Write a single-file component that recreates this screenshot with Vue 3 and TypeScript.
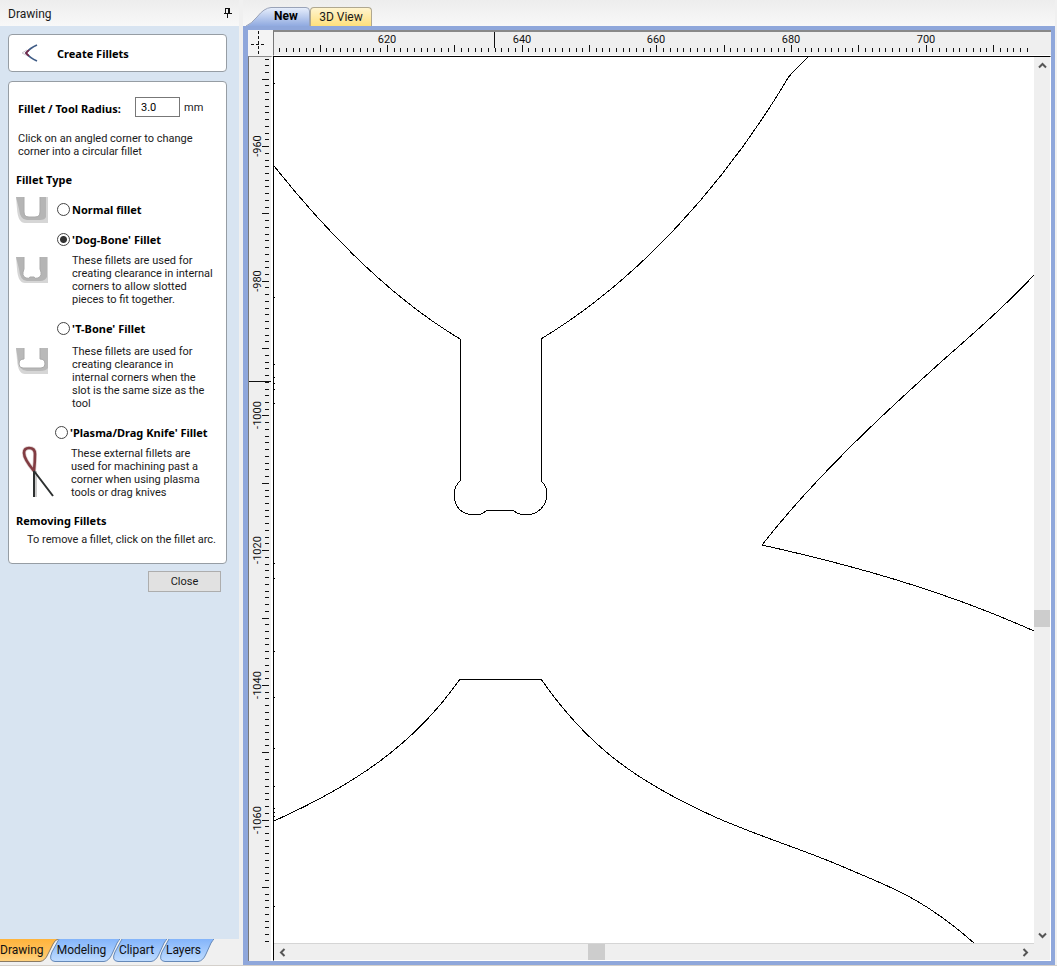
<script setup lang="ts">
import { ref } from 'vue'

interface Tick { pos: number; major: boolean; label: string }

const UNIT = 6.735

function buildTicks(first: number, count: number, start: number, step: number): Tick[] {
  const ticks: Tick[] = []
  for (let i = 0; i < count; i++) {
    const value = start + i * step
    ticks.push({
      pos: Math.floor(first + i * UNIT),
      major: value % 10 === 0,
      label: value % 20 === 0 ? String(value) : '',
    })
  }
  return ticks
}

const hTicks = buildTicks(5.7, 112, 604, 1)
const vTicks = buildTicks(2, 132, -947, -1)

const radius = ref('3.0')
const fillet = ref('dogbone')
const marks = [26, 240, 307, 320, 326, 332, 346, 506, 521, 594, 640, 691, 729, 751, 755, 759, 849]

const sideTabs = [
  { name: 'Modeling', width: 70 },
  { name: 'Clipart', width: 54 },
  { name: 'Layers', width: 54 },
]

function tabShape(w: number): string {
  return `M9 0 L2 13 Q-2 22 5 22.5 H${w - 16} Q${w - 11} 22 ${w - 8} 15 L${w - 3} 4 Q${w - 1} 1 ${w} 0`
}
</script>

<template>
  <div class="app">
    <aside class="side">
      <header class="side-head">
        <span>Drawing</span>
        <button class="pin" aria-label="Pin panel">
          <svg width="9" height="11" viewBox="0 0 9 11"><path d="M2.5 6V1.5H6V6M6.5 1V6M5.5 1V6M0.5 6.5H8.5M4.5 7V11" /></svg>
        </button>
      </header>

      <div class="side-body">
        <section class="card title-card">
          <button class="back" aria-label="Back">
            <svg width="18" height="20" viewBox="0 0 18 20">
              <path d="M1 10L6 7M1 10L7 13" stroke="#c9c4cc" stroke-width="1" />
              <path d="M16 2Q9 5 5 10Q9 15 16 18" stroke="#3f5c86" stroke-width="1.8" />
              <path d="M8 7L5 10L8 13" stroke="#7a2547" stroke-width="1.6" />
            </svg>
          </button>
          <h1>Create Fillets</h1>
        </section>

        <section class="card form-card">
          <div class="radius">
            <label for="radius">Fillet / Tool Radius:</label>
            <input id="radius" v-model="radius" type="text" />
            <span>mm</span>
          </div>
          <p class="hint">Click on an angled corner to change<br />corner into a circular fillet</p>
          <h2 class="type-title">Fillet Type</h2>

          <div class="option normal">
            <svg class="icon" width="32" height="27" viewBox="0 0 32 27">
              <path d="M0 0H8V15Q8 20 13 20H19Q24 20 24 15V0H32V26H9Q2 26 1 12Z" fill="#d6d6d6" />
              <path d="M0 0H8V15Q8 20 13 20H19Q24 20 24 15V0H30V20Q29 23 24 23H11Q4 23 3 12Z" fill="#b5b5b5" />
              <path d="M8 0V15Q8 20 13 20H19Q24 20 24 15V0" fill="none" stroke="#aaa" />
            </svg>
            <label class="choice"><input v-model="fillet" type="radio" name="fillet" value="normal" />Normal fillet</label>
          </div>

          <div class="option dogbone">
            <svg class="icon" width="32" height="27" viewBox="0 0 32 27">
              <path d="M0 0H8V12Q5 19 10 21Q14 22 14 20H18Q19 22 22 21Q27 19 24 12V0H32V26H9Q2 26 1 12Z" fill="#d6d6d6" />
              <path d="M0 0H8V12Q5 19 10 21Q14 22 14 20H18Q19 22 22 21Q27 19 24 12V0H31V20Q29 24 24 24H11Q4 24 3 12Z" fill="#b5b5b5" />
              <path d="M8 0V12Q5 19 10 21Q13 22 14 20H18Q19 22 22 21Q27 19 24 12V0" fill="none" stroke="#aaa" />
            </svg>
            <div>
              <label class="choice"><input v-model="fillet" type="radio" name="fillet" value="dogbone" />'Dog-Bone' Fillet</label>
              <p class="desc">These fillets are used for<br />creating clearance in internal<br />corners to allow slotted<br />pieces to fit together.</p>
            </div>
          </div>

          <div class="option tbone">
            <svg class="icon" width="32" height="27" viewBox="0 0 32 27">
              <path d="M0 0H8V11Q3 11 3 16Q3 20 7 20H25Q29 20 29 16Q29 11 24 11V0H32V26H9Q2 26 1 12Z" fill="#d6d6d6" />
              <path d="M0 0H8V11Q3 11 3 16Q3 20 7 20H25Q29 20 29 16Q29 11 24 11V0H32V20Q30 23 24 23H11Q3 23 2 12Z" fill="#b9b9b9" />
              <path d="M8 0V11Q3 11 3 16Q3 20 7 20H25Q29 20 29 16Q29 11 24 11V0" fill="none" stroke="#aaa" />
            </svg>
            <div>
              <label class="choice"><input v-model="fillet" type="radio" name="fillet" value="tbone" />'T-Bone' Fillet</label>
              <p class="desc">These fillets are used for<br />creating clearance in<br />internal corners when the<br />slot is the same size as the<br />tool</p>
            </div>
          </div>

          <div class="option plasma">
            <svg class="icon" width="40" height="54" viewBox="0 0 40 54">
              <path d="M18 26Q8 14 8 8Q8 3 13 3Q19 3 19 9Q19 17 18 26" fill="none" stroke="#b99" stroke-width="4" opacity=".5" />
              <path d="M18 26Q8 14 8 8Q8 3 13 3Q19 3 19 9Q19 17 18 26" fill="none" stroke="#813c42" stroke-width="2.6" />
              <path d="M19 26V52" stroke="#aaa" stroke-width="4" opacity=".6" />
              <path d="M18 26V52M18 26L37 51" stroke="#2d3030" stroke-width="2" />
            </svg>
            <div>
              <label class="choice"><input v-model="fillet" type="radio" name="fillet" value="plasma" />'Plasma/Drag Knife' Fillet</label>
              <p class="desc">These external fillets are<br />used for machining past a<br />corner when using plasma<br />tools or drag knives</p>
            </div>
          </div>

          <h2 class="remove-title">Removing Fillets</h2>
          <p class="remove">To remove a fillet, click on the fillet arc.</p>
        </section>
        <button class="close">Close</button>
      </div>

      <nav class="side-tabs">
        <button class="side-tab active">
          <svg width="58" height="24" viewBox="0 0 58 24">
            <defs>
              <linearGradient id="orange" x1="0" y1="0" x2="0" y2="1"><stop offset="0" stop-color="#ffb43c" /><stop offset=".5" stop-color="#ffbf58" /><stop offset="1" stop-color="#ffd27f" /></linearGradient>
              <linearGradient id="blue" x1="0" y1="0" x2="0" y2="1"><stop offset="0" stop-color="#83b4fa" /><stop offset="1" stop-color="#bfdcff" /></linearGradient>
            </defs>
            <path d="M0 0H58Q55 1 53 5L48 15Q45 22 40 22.500H0Z" fill="url(#orange)" />
            <path d="M58 0Q55 1 53 5L48 15Q45 22 40 22.500H0" fill="none" stroke="#8a7a62" />
          </svg>
          <span>Drawing</span>
        </button>
        <button v-for="tab in sideTabs" :key="tab.name" class="side-tab" :style="{ width: tab.width + 'px' }">
          <svg :width="tab.width" height="24">
            <path :d="tabShape(tab.width)" fill="url(#blue)" stroke="#6689b8" />
          </svg>
          <span>{{ tab.name }}</span>
        </button>
      </nav>
    </aside>

    <main class="work">
      <nav class="doc-tabs">
        <button class="doc-tab current">
          <svg width="67" height="19" viewBox="0 0 67 19">
            <defs><linearGradient id="newtab" x1="0" y1="0" x2="0" y2="1"><stop offset="0" stop-color="#e8effc" /><stop offset="1" stop-color="#90aae0" /></linearGradient></defs>
            <path d="M3 19Q8 17 14 10Q21 1 28 .5H63Q66.500 .5 66.500 4V19" fill="url(#newtab)" stroke="#9aa3b8" />
          </svg>
          <span>New</span>
        </button>
        <button class="doc-tab view3d">3D View</button>
      </nav>

      <div class="frame">
        <div class="corner">
          <svg width="25" height="25" viewBox="0 0 25 25"><path d="M10.500 1V24M3 14.500H18" stroke="#111" stroke-dasharray="3 2" /></svg>
        </div>
        <svg class="ruler h-ruler">
          <g v-for="t in hTicks" :key="t.pos">
            <rect :x="t.pos" :y="t.major ? 13 : 16" width="1" :height="t.major ? 7 : 4" />
            <text v-if="t.label" :x="t.pos" y="11" text-anchor="middle">{{ t.label }}</text>
          </g>
          <rect x="220" y="0" width="1" height="16" />
        </svg>
        <svg class="ruler v-ruler">
          <g v-for="t in vTicks" :key="t.pos">
            <rect :x="t.major ? 13 : 16" :y="t.pos" :width="t.major ? 7 : 4" height="1" />
            <text v-if="t.label" :transform="`translate(12 ${t.pos}) rotate(-90)`" text-anchor="middle">{{ t.label }}</text>
          </g>
          <rect x="0" y="324" width="22" height="1" />
        </svg>

        <div class="view">
          <svg class="canvas">
            <g transform="translate(-274 -57)">
              <path d="M274 166C325 230 390 297 460 339V481Q454 487 454 494C454 502 456 506 460 510Q467 515 474 515Q480 515 483 513L488 510H513L517 513Q521 515 527 515Q534 515 541 509Q547 502 547 494Q547 486 541 481V339C640 279 724 184 785 83Q788 77 792 73L808 57" />
              <path d="M1034 275C1012 299 988 321 950 354C886 411 815 477 762 545C860 567 947 592 1034 631" />
              <path d="M274 821C354 785 414 745 460 679H541C586 744 633 780 715 817C765 839 809 851 855 872C899 890 930 904 974 943" />
            </g>
            <rect v-for="m in marks" :key="m" x="0" :y="m" width="1" height="1" />
          </svg>
          <div class="bar vertical">
            <button aria-label="Scroll up"><svg width="9" height="7" viewBox="0 0 9 7"><path d="M1 5.500L4.500 2L8 5.500" /></svg></button>
            <div class="thumb"></div>
            <button aria-label="Scroll down"><svg width="9" height="7" viewBox="0 0 9 7"><path d="M1 1.500L4.500 5L8 1.500" /></svg></button>
          </div>
          <div class="bar horizontal">
            <button aria-label="Scroll left"><svg width="7" height="9" viewBox="0 0 7 9"><path d="M5.500 1L2 4.500L5.500 8" /></svg></button>
            <div class="thumb"></div>
            <button aria-label="Scroll right"><svg width="7" height="9" viewBox="0 0 7 9"><path d="M1.500 1L5 4.500L1.500 8" /></svg></button>
          </div>
        </div>
      </div>
    </main>
  </div>
</template>

<style>
body { margin: 0; }
</style>

<style scoped>
.app {
  display: flex;
  height: 100vh;
  box-sizing: border-box;
  background: #f0f0f0;
  border-bottom: 1px solid #d4d0cb;
  font-family: Roboto, "Liberation Sans", sans-serif;
  font-size: 11px;
  line-height: 13px;
  color: #1a1a1a;
  overflow: hidden;
}
button { font: inherit; color: inherit; padding: 0; border: 0; background: none; }
h1, h2, p { margin: 0; }
h1, h2, label { font-family: "Noto Sans", sans-serif; font-size: 11px; font-weight: 700; line-height: 13px; color: #000; }

.side { width: 239px; flex: none; display: flex; flex-direction: column; margin-right: 4px; }
.side-head {
  height: 26px;
  display: flex;
  align-items: center;
  justify-content: space-between;
  box-sizing: border-box;
  padding: 2px 7px 0 8px;
  background: linear-gradient(#ededed, #f8f8f8);
  font-size: 12px;
}
.pin { height: 11px; display: flex; margin-bottom: 4px; }
.pin path { fill: none; stroke: #111; shape-rendering: crispEdges; }
.side-body { flex: 1; padding: 8px 12px 0 8px; background: #d8e4f1; display: flex; flex-direction: column; }
.card { background: #fff; border: 1px solid #969da4; border-radius: 4px; }
.title-card { height: 36px; display: flex; align-items: center; padding-left: 12px; }
.back { display: flex; width: 36px; }
.back path { fill: none; }
.form-card { margin-top: 9px; padding: 15px 0 17px 7px; }
.radius { display: flex; align-items: center; height: 20px; padding-left: 2px; }
.radius label { width: 117px; padding-top: 2px; white-space: nowrap; }
.radius input {
  width: 45px;
  height: 20px;
  box-sizing: border-box;
  border: 1px solid #777;
  padding: 0 5px;
  font: inherit;
  background: #fff;
}
.radius span { margin-left: 4px; }
.hint { margin-top: 15px; padding-left: 2px; white-space: nowrap; }
.type-title { margin-top: 15px; }
.option { display: flex; white-space: nowrap; }
.icon { flex: none; margin-right: 9px; }
.choice { display: flex; align-items: center; height: 14px; gap: 2px; }
.choice input {
  appearance: none;
  width: 13px;
  height: 13px;
  margin: 0;
  border: 1px solid #444;
  border-radius: 50%;
  background: #fff;
}
.choice input:checked { background: radial-gradient(circle, #333 0 3px, #fff 4px); }
.desc { padding-left: 15px; }
.normal { margin-top: 11px; height: 27px; }
.normal .choice { margin-top: 5px; }
.dogbone { margin-top: 8px; }
.dogbone .icon { margin-top: 25px; }
.dogbone .desc { margin-top: 8px; }
.tbone { margin-top: 15px; }
.tbone .icon { margin-top: 27px; }
.tbone .desc { margin-top: 10px; }
.plasma { margin-top: 15px; height: 74px; }
.plasma .icon { margin: 20px 0 0 0; }
.plasma > div { margin-left: -1px; }
.plasma .desc { margin-top: 8px; padding-left: 16px; }
.remove-title { margin-top: 15px; }
.remove { margin-top: 6px; padding-left: 11px; white-space: nowrap; }
.close {
  width: 73px;
  height: 21px;
  margin: 7px 6px 0 0;
  align-self: flex-end;
  background: #e1e1e1;
  border: 1px solid #adadad;
}
.side-tabs { display: flex; height: 26px; flex: none; font-size: 12px; color: #111; }
.side-tab { position: relative; height: 23px; flex: none; margin-right: -7px; padding-right: 7px; }
.side-tab svg { position: absolute; left: 0; top: 0; }
.side-tab span { position: relative; }
.side-tab.active { width: 57px; z-index: 1; text-align: left; }

.work { flex: 1; min-width: 0; display: flex; flex-direction: column; margin-right: 2px; }
.doc-tabs { height: 26px; display: flex; align-items: flex-end; background: linear-gradient(#ededed, #f8f8f8); font-size: 12px; }
.doc-tab { height: 19px; }
.doc-tab.current { position: relative; width: 67px; font-weight: 700; padding-left: 19px; color: #000; }
.doc-tab.current svg { position: absolute; left: 0; top: 0; }
.doc-tab.current span { position: relative; }
.doc-tab.view3d {
  width: 62px;
  border: 1px solid #b0a890;
  border-bottom: 0;
  border-radius: 4px 4px 0 0;
  background: linear-gradient(#fff4cf, #ffe07c);
}
.frame {
  flex: 1;
  min-height: 0;
  display: grid;
  grid-template-columns: 25px 1fr;
  grid-template-rows: 26px 1fr;
  border: 4px solid #8fa7db;
  border-left-width: 5px;
  background: #efefef;
}
.corner { background: #f4f4f4; }
.corner svg { display: block; shape-rendering: crispEdges; }
.ruler { display: block; width: 100%; height: 100%; box-sizing: border-box; overflow: hidden; font-size: 11px; fill: #111; shape-rendering: crispEdges; }
.h-ruler { border-top: 2px solid #888; border-left: 1px solid #777; border-bottom: 1px solid #fff; }
.v-ruler { border-left: 1px solid #777; border-top: 1px solid #888; border-right: 2px solid #fff; }
.view {
  min-width: 0;
  min-height: 0;
  display: grid;
  grid-template-columns: 1fr 16px;
  grid-template-rows: 1fr 16px;
  border: 1px solid #fff;
  border-top-color: #000;
  border-left-color: #000;
}
.canvas { display: block; width: 100%; height: 100%; background: #fff; overflow: hidden; border-bottom: 1px solid #d5d5d5; box-sizing: border-box; }
.canvas path { fill: none; stroke: #000; stroke-width: 1; shape-rendering: crispEdges; }
.bar { display: grid; background: #efefef; }
.bar button { display: flex; align-items: center; justify-content: center; }
.bar path { fill: none; stroke: #555; stroke-width: 2; }
.vertical { grid-template-rows: 17px 536fr 17px 300fr 17px; }
.vertical .thumb { grid-row: 3; }
.vertical button:last-child { grid-row: 5; }
.horizontal { grid-template-columns: 17px 297fr 17px 412fr 17px; }
.horizontal .thumb { grid-column: 3; }
.horizontal button:last-child { grid-column: 5; }
.thumb { background: #cdcdcd; }
</style>
